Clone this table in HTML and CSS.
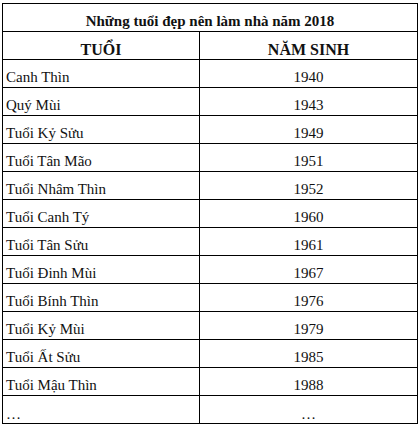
FILE: index.html
```html
<!DOCTYPE html>
<html>
<head>
<meta charset="utf-8">
<link rel="stylesheet" href="styles.css">
</head>
<body>
<table class="ages">
  <colgroup><col class="c1"><col class="c2"></colgroup>
  <tr><th colspan="2" class="title">Những tuổi đẹp nên làm nhà năm 2018</th></tr>
  <tr><th class="head">TUỔI</th><th class="head">NĂM SINH</th></tr>
  <tr><td>Canh Thìn</td><td class="num">1940</td></tr>
  <tr><td>Quý Mùi</td><td class="num">1943</td></tr>
  <tr><td>Tuổi Kỷ Sửu</td><td class="num">1949</td></tr>
  <tr><td>Tuổi Tân Mão</td><td class="num">1951</td></tr>
  <tr><td>Tuổi Nhâm Thìn</td><td class="num">1952</td></tr>
  <tr><td>Tuổi Canh Tý</td><td class="num">1960</td></tr>
  <tr><td>Tuổi Tân Sửu</td><td class="num">1961</td></tr>
  <tr><td>Tuổi Đinh Mùi</td><td class="num">1967</td></tr>
  <tr><td>Tuổi Bính Thìn</td><td class="num">1976</td></tr>
  <tr><td>Tuổi Kỷ Mùi</td><td class="num">1979</td></tr>
  <tr><td>Tuổi Ất Sửu</td><td class="num">1985</td></tr>
  <tr><td>Tuổi Mậu Thìn</td><td class="num">1988</td></tr>
  <tr><td class="dots">…</td><td class="num dots">…</td></tr>
</table>
</body>
</html>
```
FILE: styles.css
```css
html, body {
  margin: 0;
  padding: 0;
  background: #fff;
}
body {
  padding: 3px 0 0 2px;
  font-family: "Liberation Serif", "Times New Roman", serif;
  color: #111;
}
.ages {
  border-collapse: collapse;
  table-layout: fixed;
  width: 415px;
  font-size: 15px;
}
.c1 { width: 197px; }
.c2 { width: 218px; }
.ages th, .ages td {
  border: 1px solid #000;
  height: 28px;
  padding: 0 3px 1px 3px;
  vertical-align: bottom;
  line-height: 17px;
  text-align: left;
  font-weight: normal;
  box-sizing: border-box;
}
.ages th.title {
  text-align: center;
  font-weight: bold;
}
.ages th.head {
  text-align: center;
  font-weight: bold;
  font-size: 16px;
}
.ages td.num {
  text-align: center;
}
.ages td.dots {
  padding-bottom: 0;
}
```
